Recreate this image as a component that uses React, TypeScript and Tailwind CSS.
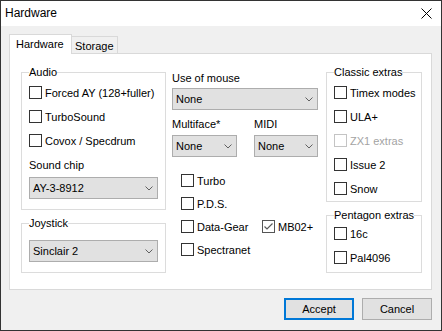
import React from "react";

function Check({ label, checked, disabled }: { label: string; checked?: boolean; disabled?: boolean }) {
  return (
    <div className="flex items-center h-[13px]">
      <span
        className={`w-[13px] h-[13px] border bg-white flex items-center justify-center shrink-0 ${
          disabled ? "border-[#c4c4c4]" : checked ? "border-[#555555]" : "border-[#333333]"
        }`}
      >
        {checked && (
          <svg width="11" height="11" viewBox="0 0 11 11">
            <polyline points="1.5,5.5 4,8 9.5,2.5" fill="none" stroke="#5a5a5a" strokeWidth="1.2" />
          </svg>
        )}
      </span>
      <span className={`ml-[3px] leading-[14px] whitespace-nowrap ${disabled ? "text-[#a3a3a3]" : "text-black"}`}>
        {label}
      </span>
    </div>
  );
}

function Combo({ value }: { value: string }) {
  return (
    <div className="h-[22px] w-full border border-[#adadad] bg-[#e1e1e1] flex items-center justify-between pl-[3px] pr-[4px]">
      <span className="leading-[14px] text-black">{value}</span>
      <svg width="8" height="5" viewBox="0 0 8 5">
        <polyline points="0.5,0.5 4,4 7.5,0.5" fill="none" stroke="#606060" strokeWidth="1" />
      </svg>
    </div>
  );
}

function Group({ title, className, children }: { title: string; className?: string; children: React.ReactNode }) {
  return (
    <fieldset className={`border border-[#dcdcdc] px-[7px] min-w-0 ${className ?? ""}`}>
      <legend className="leading-[15px] p-0 text-black whitespace-nowrap">{title}</legend>
      {children}
    </fieldset>
  );
}

export default function App() {
  return (
    <div className="w-[442px] h-[331px] flex flex-col border border-[#333333] bg-white font-['Liberation_Sans',Arial,sans-serif] text-[11px] text-black overflow-hidden">
      {/* Title bar */}
      <div className="h-[25px] shrink-0 bg-white flex items-center justify-between pl-[4px] pr-[9px]">
        <span className="text-[12px] leading-[25px]">Hardware</span>
        <svg width="11" height="11" viewBox="0 0 11 11">
          <line x1="0.5" y1="0.5" x2="10.5" y2="10.5" stroke="#000" strokeWidth="1" />
          <line x1="10.5" y1="0.5" x2="0.5" y2="10.5" stroke="#000" strokeWidth="1" />
        </svg>
      </div>

      {/* Body */}
      <div className="flex-1 flex flex-col bg-[#f0f0f0] pt-[8px] pl-[8px] pr-[9px] pb-[10px]">
        {/* Tabs */}
        <div className="flex items-end h-[19px] shrink-0">
          <div className="relative z-10 h-[20px] -mb-px w-[63px] bg-white border-l border-t border-r border-[#d9d9d9] flex items-start pl-[6px] pt-[2px]">
            <span className="leading-[14px]">Hardware</span>
          </div>
          <div className="h-[17px] w-[46px] bg-[#f0f0f0] border-l-0 border-t border-r border-[#d9d9d9] flex items-start pl-[3px] pt-[2px]">
            <span className="leading-[14px]">Storage</span>
          </div>
        </div>

        {/* Panel */}
        <div className="flex-1 bg-white border border-[#d9d9d9] flex items-start pl-[11px] pt-[11px]">
          {/* Left column */}
          <div className="w-[145px] flex flex-col gap-[6px]">
            <Group title="Audio" className="pb-[10px]">
              <div className="flex flex-col gap-[11px] mt-[6px]">
                <Check label="Forced AY (128+fuller)" />
                <Check label="TurboSound" />
                <Check label="Covox / Specdrum" />
              </div>
              <div className="mt-[11px] leading-[14px]">Sound chip</div>
              <div className="mt-[5px]">
                <Combo value="AY-3-8912" />
              </div>
            </Group>
            <Group title="Joystick" className="pb-[10px]">
              <div className="mt-[9px]">
                <Combo value="Sinclair 2" />
              </div>
            </Group>
          </div>

          {/* Middle column */}
          <div className="w-[146px] ml-[6px] flex flex-col pt-[6px]">
            <div className="leading-[14px]">Use of mouse</div>
            <div className="mt-[3px]">
              <Combo value="None" />
            </div>
            <div className="flex justify-between mt-[7px]">
              <div className="w-[65px] flex flex-col gap-[4px]">
                <div className="leading-[14px]">Multiface*</div>
                <Combo value="None" />
              </div>
              <div className="w-[64px] flex flex-col gap-[4px]">
                <div className="leading-[14px]">MIDI</div>
                <Combo value="None" />
              </div>
            </div>
            <div className="flex flex-col gap-[10px] mt-[17px] pl-[9px]">
              <Check label="Turbo" />
              <Check label="P.D.S." />
              <div className="flex">
                <div className="w-[81px]">
                  <Check label="Data-Gear" />
                </div>
                <Check label="MB02+" checked />
              </div>
              <Check label="Spectranet" />
            </div>
          </div>

          {/* Right column */}
          <div className="w-[96px] ml-[8px] flex flex-col gap-[6px]">
            <Group title="Classic extras" className="pb-[6px]">
              <div className="flex flex-col gap-[11px] mt-[6px]">
                <Check label="Timex modes" />
                <Check label="ULA+" />
                <Check label="ZX1 extras" disabled />
                <Check label="Issue 2" />
                <Check label="Snow" />
              </div>
            </Group>
            <Group title="Pentagon extras" className="pb-[8px] pr-[2px]">
              <div className="flex flex-col gap-[11px] mt-[4px]">
                <Check label="16c" />
                <Check label="Pal4096" />
              </div>
            </Group>
          </div>
        </div>

        {/* Buttons */}
        <div className="flex justify-end gap-[8px] mt-[8px] shrink-0">
          <button className="w-[70px] h-[22px] border-2 border-[#0078d7] bg-[#e1e1e1] leading-[14px] text-black">
            Accept
          </button>
          <button className="w-[70px] h-[22px] border border-[#adadad] bg-[#e1e1e1] leading-[14px] text-black">
            Cancel
          </button>
        </div>
      </div>
    </div>
  );
}
